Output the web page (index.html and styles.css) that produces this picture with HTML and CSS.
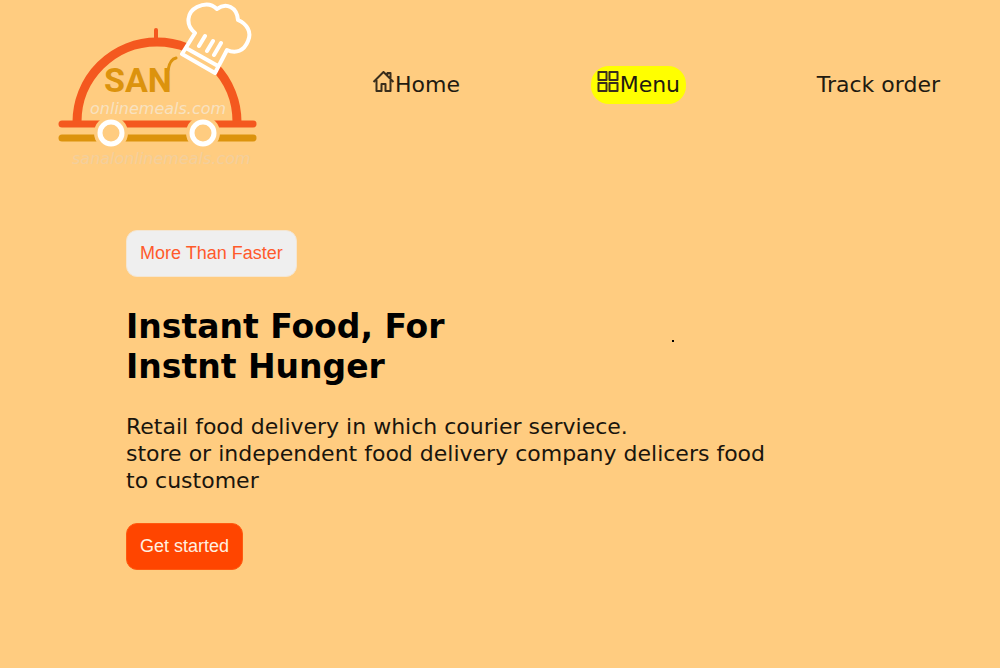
FILE: index.html
```html
<!DOCTYPE html>
<html lang="en">
<head>
<meta charset="utf-8">
<title>San Online Meals</title>
<link rel="stylesheet" href="styles.css">
</head>
<body>
<header class="header">
  <a class="brand" href="#" aria-label="San onlinemeals.com">
    <svg class="logo" viewBox="0 0 210 170">
      <path class="dome" d="M27 122A80 80 0 0 1 187 122"/>
      <path class="knob" d="M106 30V41"/>
      <path class="rail" d="M12 124H203"/>
      <path class="rail rail-gold" d="M12 138H203"/>
      <g class="wheel">
        <circle class="gap" cx="61" cy="133" r="17"/>
        <circle cx="61" cy="133" r="11"/>
        <circle class="gap" cx="153" cy="133" r="17"/>
        <circle cx="153" cy="133" r="11"/>
      </g>
      <path class="hat" d="M132 54L145 33C135 25 137 12 147 7C155 3 162 4 167 9C176 2 187 7 188 20C197 24 202 32 198 41C194 51 186 54 177 50L165 73ZM136 48L168 66M149 46L155 36M157 51L163 41M164 55L171 43"/>
      <text class="name" x="54" y="92">SAN</text>
      <path class="flourish" d="M118 70Q120 59 126 58"/>
      <text class="site" x="40" y="114">onlinemeals.com</text>
      <text class="site-faint" x="22" y="164">sanalonlinemeals.com</text>
    </svg>
  </a>
  <nav class="nav">
    <a class="link" href="#"><svg class="icon" viewBox="0 0 22 22"><path d="M1 11L11 1L21 11M4 9V20H9V13H13V20H18V9M15 4V2H18V7"/></svg>Home</a>
    <a class="link active" href="#"><svg class="icon" viewBox="0 0 22 22"><path d="M1 1H9V9H1ZM12 1H20V9H12ZM1 12H9V20H1ZM12 12H20V20H12Z"/></svg>Menu</a>
    <a class="link" href="#">Track order</a>
  </nav>
</header>
<main class="hero">
  <button class="button tag" type="button">More Than Faster</button>
  <h1 class="title">Instant Food, For<br>Instnt Hunger</h1>
  <p class="text">Retail food delivery in which courier serviece.<br>store or independent food delivery company delicers food<br>to customer</p>
  <button class="button start" type="button">Get started</button>
  <span class="dot"></span>
</main>
</body>
</html>
```
FILE: styles.css
```css
body {
  margin: 0;
  min-height: 100vh;
  background: #ffcc80;
  color: #000;
  font-family: Verdana, "DejaVu Sans", sans-serif;
}
.header {
  display: flex;
  align-items: center;
  padding: 0 54px 0 50px;
}
.brand { flex: none; }
.logo {
  display: block;
  width: 210px;
  height: 170px;
  fill: none;
}
.dome { stroke: #f4581f; stroke-width: 9; }
.knob { stroke: #f4581f; stroke-width: 4; stroke-linecap: round; }
.rail { stroke: #f4581f; stroke-width: 7; stroke-linecap: round; }
.rail-gold { stroke: #dc930d; }
.wheel { stroke: #fff; stroke-width: 5; }
.gap { fill: #ffcc80; stroke: none; }
.hat {
  fill: #ffcc80;
  stroke: #fff;
  stroke-width: 4;
  stroke-linecap: round;
  stroke-linejoin: round;
}
.name {
  fill: #dc930d;
  font: bold 34px Roboto, sans-serif;
}
.flourish { stroke: #dc930d; stroke-width: 3; stroke-linecap: round; }
.site { fill: #f8e2c0; font: italic 16px "DejaVu Sans", sans-serif; }
.site-faint { fill: #f3cf9c; font: italic 16px "DejaVu Sans", sans-serif; }
.nav {
  flex: 1;
  display: flex;
  justify-content: space-between;
  margin-left: 106px;
}
.link {
  display: flex;
  align-items: center;
  padding: 5px 6px;
  border-radius: 18px;
  color: #211a10;
  font-size: 22px;
  line-height: 28px;
  text-decoration: none;
}
.active { background: #ff0; }
.icon {
  width: 23px;
  height: 22px;
  margin-bottom: 6px;
  fill: none;
  stroke: #3a2e1c;
  stroke-width: 2;
  stroke-linejoin: round;
}
.hero {
  position: relative;
  padding: 60px 126px;
}
.button {
  display: block;
  padding: 12px 13px;
  border: 1px solid #f4e6d2;
  border-radius: 11px;
  font: 18px/21px "Liberation Sans", Arial, sans-serif;
}
.tag { background: #efefef; color: #ff5a2b; }
.start { background: #ff4500; border-color: #ff5a10; color: #fff0e0; }
.title {
  margin: 30px 0 26px;
  font-size: 33px;
  line-height: 40px;
}
.text {
  margin: 0 0 29px;
  color: #1a150d;
  font-size: 22px;
  line-height: 27px;
}
.dot {
  position: absolute;
  top: 170px;
  left: 67.2%;
  width: 2px;
  height: 2px;
  background: #000;
}
```
